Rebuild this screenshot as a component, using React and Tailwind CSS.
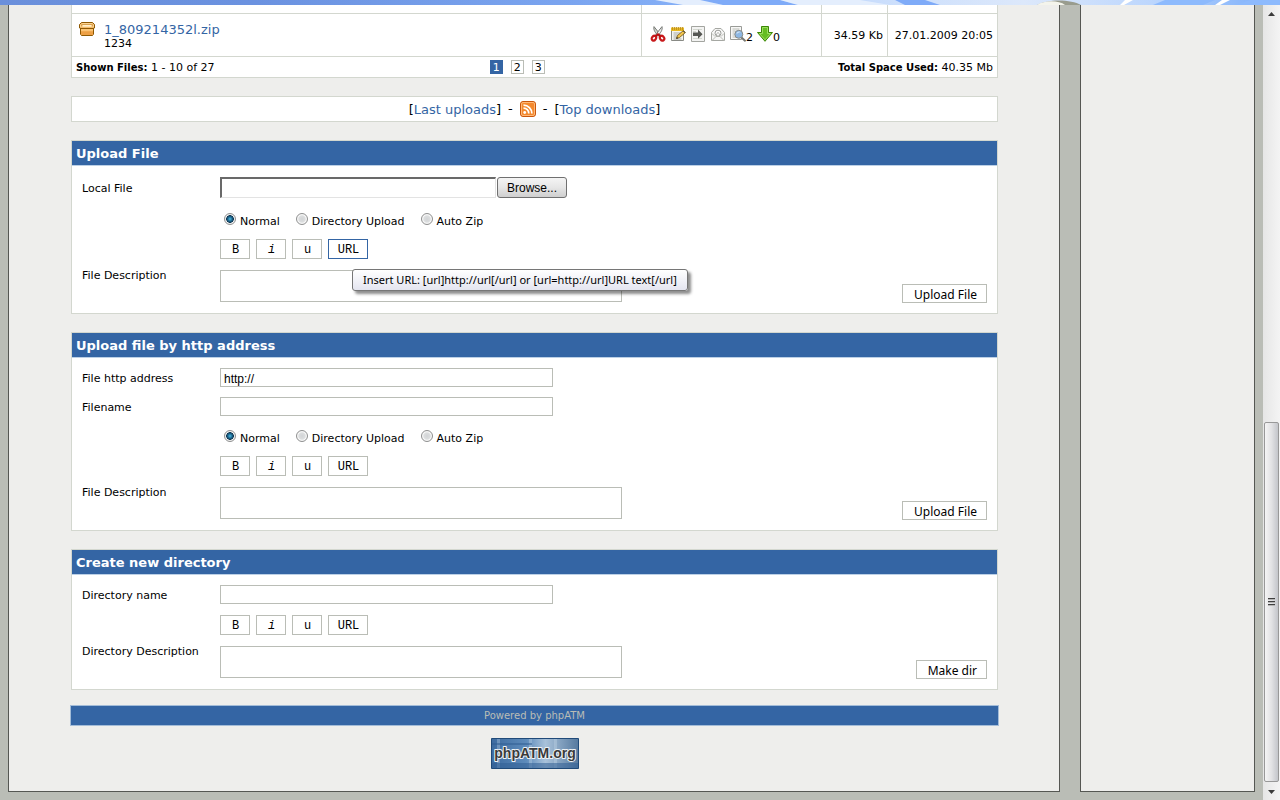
import React from "react";

const inputBox = "block h-[19px] w-[333px] border border-[#babdb6] bg-white px-[3px] pt-[3px] font-['Liberation_Sans',sans-serif] text-xs text-black outline-none";
const plainButton =
  "h-[19px] border border-[#babdb6] bg-white pl-[11px] pr-[9px] font-['Noto_Sans',sans-serif] text-xs leading-[19px] text-black";
const radioBox =
  "size-3 shrink-0 appearance-none rounded-full border border-[#8e8f8f] bg-[radial-gradient(circle,#d2d4d6_0%,#dcdedf_45%,#f8f8f8_60%,#eeeeee_100%)] checked:bg-[radial-gradient(circle_at_50%_50%,#4fc0e8_0%,#1f6d96_28%,#123a55_50%,#f4f4f4_58%,#e8e8e8_100%)]";

function ArchiveIcon() {
  return (
    <svg className="h-4 w-4 shrink-0" viewBox="0 0 16 16" aria-hidden="true">
      <path d="M2.500.5h11l2 2v3.500h-1v6l-1 1.500h-11l-1-1.500V6h-1V2.500z" fill="#eda045" stroke="#8f5902" />
      <path d="M3 1h10l2 2v2.500H1V3z" fill="#fbd391" />
      <path d="M2.500 4.500v-2h11v2" fill="none" stroke="#d9a04e" />
      <path d="M4 3h8v1.500H4z" fill="#fff0cc" />
      <path d="M1 6.500h14" stroke="#8f5902" />
      <path d="M2 7h12v2.500H2z" fill="#fbc475" />
      <path d="M2 9.500h12V13H2z" fill="#eda045" />
    </svg>
  );
}

function ScissorsIcon() {
  return (
    <svg className="size-4" viewBox="0 0 16 16" aria-hidden="true">
      <path d="M4 .6c-.8 3.600 1.500 6.400 4.600 9.500L10.300 9C8.500 6.500 6.500 3.500 4 .6z" fill="#d3d7cf" stroke="#777975" />
      <path d="M12 .6c.8 3.600-1.500 6.400-4.600 9.500L5.700 9C7.500 6.500 9.500 3.500 12 .6z" fill="#eeeeec" stroke="#777975" />
      <ellipse cx="3.900" cy="12.200" rx="2" ry="2.500" transform="rotate(35 3.900 12.200)" fill="#fff" stroke="#c8191b" strokeWidth="2.200" />
      <ellipse cx="12.100" cy="12.200" rx="2" ry="2.500" transform="rotate(-35 12.100 12.200)" fill="#fff" stroke="#c8191b" strokeWidth="2.200" />
      <path d="M5.500 10.300L8 8.300l2.500 2" fill="none" stroke="#b80f10" strokeWidth="2" />
    </svg>
  );
}

function NotepadIcon() {
  return (
    <svg className="size-4" viewBox="0 0 16 16" aria-hidden="true">
      <path d="M1.500 2.500h12v12h-12z" fill="#f4f4f0" stroke="#888a85" />
      <path d="M1 1.500h13V5H1z" fill="#e8b923" />
      <path d="M2.500 1v3m2-3v3m2-3v3m2-3v3m2-3v3m2-3v3" stroke="#b98a1c" strokeWidth=".8" />
      <path d="M3.500 7h7M3.500 9h5M3.500 11h4M3.500 13h8" stroke="#a9aba6" />
      <path d="M6.500 12.500l1-3 6-5 2 2-6 5z" fill="#f3c64e" stroke="#6d5010" strokeWidth=".8" />
      <path d="M6.300 12.800l.6-1.700 1.300 1.200z" fill="#222" />
      <path d="M13 5l2 1.800" stroke="#555753" />
    </svg>
  );
}

function MoveIcon() {
  return (
    <svg className="size-4" viewBox="0 0 16 16" aria-hidden="true">
      <path d="M1.500.5h13v15h-13z" fill="#f3f3f2" stroke="#a3a5a0" />
      <path d="M3 3.500h9M3 12.500h9M3 5.500h3" stroke="#d3d7cf" />
      <path d="M3 6.500h5V3.500L12.500 8.300l-4.500 4.500V10H3z" fill="#555753" />
    </svg>
  );
}

function MailIcon() {
  return (
    <svg className="size-4" viewBox="0 0 16 16" aria-hidden="true">
      <path d="M1.500 6.500L5 2.500h6l3.500 4v8h-13z" fill="#f6f6f5" stroke="#a5a7a2" />
      <path d="M2 14.500l4-4h4l4 4M2 7.500l3 3M14 7.500l-3 3" fill="none" stroke="#babdb6" />
      <circle cx="8" cy="7.200" r="3" fill="#fff" stroke="#9a9c98" />
      <path d="M6.500 9C6.500 6 9.500 6 9.500 9" fill="none" stroke="#9a9c98" strokeWidth=".8" />
    </svg>
  );
}

function PreviewIcon() {
  return (
    <svg className="size-4" viewBox="0 0 16 16" aria-hidden="true">
      <path d="M.5.5h11v13H.500z" fill="#f7f7f6" stroke="#999b97" />
      <path d="M2.500 3h7M2.500 5h3M2.500 7h2M2.500 9h2M2.500 11h4" stroke="#babdb6" />
      <path d="M11.500 11.500l3.500 3.200" stroke="#777975" strokeWidth="2" strokeLinecap="round" />
      <circle cx="8.800" cy="8.300" r="4" fill="#8db7e3" stroke="#888a85" />
      <path d="M6.500 8C7 5.500 9.500 5 11 6.300c-1.200 0-2.900.4-4.500 1.700z" fill="#d5e7f8" />
    </svg>
  );
}

function DownloadIcon() {
  return (
    <svg className="size-4" viewBox="0 0 16 16" aria-hidden="true">
      <path d="M4.500.5h7v6h4L8 15.300.500 6.500h4z" fill="#65bd22" stroke="#3c8706" />
      <path d="M5.500 1.500h5v6h3L8 13.800 2.500 7.500h3z" fill="none" stroke="#a8e56f" strokeWidth=".8" />
    </svg>
  );
}

function FeedIcon() {
  return (
    <svg className="size-4" viewBox="0 0 16 16" role="img" aria-label="RSS">
      <rect x=".5" y=".5" width="15" height="15" rx="2.500" fill="#f4892e" stroke="#c9560c" />
      <rect x="1.500" y="1.500" width="13" height="13" rx="1.500" fill="none" stroke="#ffb978" />
      <circle cx="4.700" cy="11.500" r="1.400" fill="#fff" />
      <path d="M3.500 7.200a5.200 5.200 0 0 1 5.300 5.300M3.500 4.100a8.400 8.400 0 0 1 8.400 8.400" fill="none" stroke="#fff" strokeWidth="1.700" />
    </svg>
  );
}

function TopStrip() {
  return (
    <svg className="block h-[5px] w-full shrink-0" viewBox="0 0 1280 5" preserveAspectRatio="none" aria-hidden="true">
      <defs>
        <linearGradient id="sky">
          <stop offset="0" stopColor="#6a8fdb" />
          <stop offset=".2" stopColor="#6b92e0" />
          <stop offset=".45" stopColor="#7ba5f0" />
          <stop offset=".6" stopColor="#8db8fc" />
          <stop offset=".68" stopColor="#c9ddfc" />
          <stop offset=".8" stopColor="#dce8fb" />
          <stop offset=".9" stopColor="#bcd6fd" />
          <stop offset="1" stopColor="#78acfa" />
        </linearGradient>
      </defs>
      <path d="M0 0h1280v5H0z" fill="url(#sky)" />
      <path d="M700 0h80l18 5h-75zM895 0h30l15 5h-35z" fill="#7fabf8" />
      <path d="M700 0h-45l28 5h40zM780 0h80l30 5h-92z" fill="#e4eefd" />
      <path d="M1125 0h8l-9 5h-4zM1222 0h8l-10 5h-5z" fill="#fff" />
      <path d="M1165 0h50l-12 5h-50zM1250 0h30v5h-45z" fill="#8dbafd" />
      <path d="M1037 5c10-6 34-6 44 0z" fill="#999c8e" />
      <path d="M1037 5c7-5 22-5 28 0z" fill="#f4f4ec" />
    </svg>
  );
}

function PhpAtmBadge() {
  return (
    <svg className="block h-[31px] w-[88px]" viewBox="0 0 88 31" role="img" aria-label="phpATM.org">
      <defs>
        <linearGradient id="badge">
          <stop offset="0" stopColor="#3d6ba0" />
          <stop offset=".4" stopColor="#5d8bbb" />
          <stop offset=".62" stopColor="#a9c2da" />
          <stop offset="1" stopColor="#55799f" />
        </linearGradient>
      </defs>
      <path d="M.5.5h87v30H.500z" fill="url(#badge)" stroke="#204a79" />
      <path d="M6 1h3v29H6zM38 1h3v29h-3zM63 1h3v29h-3z" fill="#d1e0ee" opacity=".3" />
      <path d="M1 5h40v2H1zM1 25h86v5H1z" fill="#315f93" opacity=".55" />
      <text x="44" y="20" textAnchor="middle" fontFamily="'Liberation Sans', sans-serif" fontSize="14" fontWeight="bold" fill="#3a3a3a" stroke="#eef2f5" strokeWidth="2" strokeLinejoin="round" paintOrder="stroke">
        phpATM.org
      </text>
    </svg>
  );
}

function FormatBar({ active }) {
  const base = "block h-5 border bg-white pl-px text-center font-['Liberation_Mono',monospace] text-xs leading-[20px] text-black";
  const idle = "border-[#babdb6]";
  return (
    <div className="flex h-5 gap-[6px]">
      <button type="button" className={`${base} ${idle} w-[30px]`}>B</button>
      <button type="button" className={`${base} ${idle} w-[30px] italic`}>i</button>
      <button type="button" className={`${base} ${idle} w-[30px]`}>u</button>
      <div className="relative">
        <button type="button" className={`${base} ${active ? "border-[#3465a4]" : idle} w-10`}>URL</button>
        {active && (
          <div
            role="tooltip"
            className="absolute left-6 top-[30px] z-10 h-[22px] whitespace-nowrap rounded-[3px] border border-[#767676] bg-linear-to-b from-white to-[#e4e5f0] px-[10px] font-['Noto_Sans',sans-serif] text-[11px] leading-5 text-black shadow-[3px_3px_3px_rgba(0,0,0,0.45)]"
          >
            Insert URL: [url]http://url[/url] or [url=http://url]URL text[/url]
          </div>
        )}
      </div>
    </div>
  );
}

function ModeRadios({ name }) {
  return (
    <div className="flex h-5 items-center gap-4 pl-1">
      {["Normal", "Directory Upload", "Auto Zip"].map((mode, i) => (
        <label key={mode} className="flex items-center gap-1">
          <input type="radio" name={name} defaultChecked={i === 0} className={radioBox} />
          <span className="pt-[6px] leading-3">{mode}</span>
        </label>
      ))}
    </div>
  );
}

function Row({ label, htmlFor, labelPad = "pt-[5px]", children }) {
  return (
    <div className="flex">
      <div className="w-[138px] shrink-0">
        {label && (
          <label htmlFor={htmlFor} className={`block leading-3 ${labelPad}`}>
            {label}
          </label>
        )}
      </div>
      {children}
    </div>
  );
}

function Section({ title, submit, children }) {
  return (
    <section className="mt-[18px] border border-[#d3d7cf] bg-white">
      <h2 className="h-[25px] border-b border-[#bcd0e6] bg-[#3465a4] px-1 pt-px text-[13px] font-bold leading-6 text-white">{title}</h2>
      <form className="flex items-end justify-between p-[10px]">
        <div className="flex flex-col gap-[10px] pb-px">{children}</div>
        <button type="button" className={plainButton}>{submit}</button>
      </form>
    </section>
  );
}

function Description({ label, id }) {
  return (
    <Row label={label} htmlFor={id} labelPad="pt-px">
      <textarea id={id} className="mt-px block h-8 w-[402px] resize-none border border-[#babdb6] bg-white outline-none" />
    </Row>
  );
}

function PageNumber({ current, children }) {
  return (
    <a
      href={`#page-${children}`}
      className={`block h-[14px] w-[13px] border text-center leading-[13px] ${current ? "border-[#3465a4] bg-[#3465a4] text-white" : "border-[#babdb6] bg-white text-black"}`}
    >
      {children}
    </a>
  );
}

function FileTable() {
  return (
    <table className="w-full table-fixed border-collapse border border-t-0 border-[#d3d7cf] bg-white">
      <colgroup>
        <col />
        <col className="w-[180px]" />
        <col className="w-[66px]" />
        <col className="w-[110px]" />
      </colgroup>
      <tbody>
        <tr className="h-2">
          <td className="border border-t-0 border-[#d3d7cf]" />
          <td className="border border-t-0 border-[#d3d7cf]" />
          <td className="border border-t-0 border-[#d3d7cf]" />
          <td className="border border-t-0 border-[#d3d7cf]" />
        </tr>
        <tr className="h-[43px]">
          <td className="border border-[#d3d7cf] p-0 pl-[7px] pt-[2px]">
            <div className="flex items-start gap-[9px]">
              <ArchiveIcon />
              <div>
                <a href="#file" className="block text-[13px] leading-4 text-[#3465a4]">1_809214352l.zip</a>
                <div className="leading-3">1234</div>
              </div>
            </div>
          </td>
          <td className="border border-[#d3d7cf] p-0 pb-[2px] pl-2">
            <div className="flex items-center">
              <button type="button" aria-label="Delete" className="mr-1"><ScissorsIcon /></button>
              <button type="button" aria-label="Edit" className="mr-1"><NotepadIcon /></button>
              <button type="button" aria-label="Move" className="mr-1"><MoveIcon /></button>
              <button type="button" aria-label="Mail" className="mr-1"><MailIcon /></button>
              <button type="button" aria-label="View"><PreviewIcon /></button>
              <span className="pt-2 leading-3">2</span>
              <button type="button" aria-label="Download" className="ml-1"><DownloadIcon /></button>
              <span className="pt-2 leading-3">0</span>
            </div>
          </td>
          <td className="whitespace-nowrap border border-[#d3d7cf] p-0 pr-1 pt-[2px] text-right">34.59 Kb</td>
          <td className="whitespace-nowrap border border-[#d3d7cf] p-0 pr-1 pt-[2px] text-right">27.01.2009 20:05</td>
        </tr>
        <tr className="h-[21px]">
          <td colSpan={4} className="border border-[#d3d7cf] p-0 px-1">
            <div className="grid grid-cols-[48fr_auto_52fr] items-center">
              <div className="pt-[2px]"><b className="text-[10px]">Shown Files:</b> 1 - 10 of 27</div>
              <nav className="flex gap-2">
                <PageNumber current>1</PageNumber>
                <PageNumber>2</PageNumber>
                <PageNumber>3</PageNumber>
              </nav>
              <div className="pt-[2px] text-right"><b className="text-[10px]">Total Space Used:</b> 40.35 Mb</div>
            </div>
          </td>
        </tr>
      </tbody>
    </table>
  );
}

function ScrollTrack() {
  return (
    <div className="flex w-[17px] shrink-0 flex-col bg-linear-to-r from-[#e6e6e6] to-[#f4f4f4]" aria-hidden="true">
      <svg className="h-[17px] w-full shrink-0" viewBox="0 0 17 17"><path d="M5 11l3.500-4 3.500 4z" fill="#3b3b3b" /></svg>
      <div className="flex-[401]" />
      <div className="mx-px flex flex-[358] flex-col items-center justify-center gap-px rounded-[2px] border border-[#989898] bg-linear-to-r from-[#f5f5f5] via-[#e2e2e4] to-[#c3c5ca]">
        <div className="h-[2px] w-[7px] border-t border-[#404040] bg-[#b5b5b5]" />
        <div className="h-[2px] w-[7px] border-t border-[#404040] bg-[#b5b5b5]" />
        <div className="h-[2px] w-[7px] border-t border-[#404040] bg-[#b5b5b5]" />
      </div>
      <svg className="h-[18px] w-full shrink-0" viewBox="0 0 17 18"><path d="M5 8l3.500 4L12 8z" fill="#3b3b3b" /></svg>
    </div>
  );
}

export default function App() {
  return (
    <div className="flex min-h-screen flex-col bg-[#babdb6] font-['DejaVu_Sans',Verdana,sans-serif] text-[11px] leading-4 text-black">
      <TopStrip />
      <div className="flex flex-1">
        <div className="flex flex-1 gap-5 px-2 pb-2">
          <main className="min-w-0 flex-1 border border-t-0 border-[#555753] bg-[#eeeeec] pb-[22px] pl-[62px] pr-[61px]">
            <FileTable />

            <div className="mt-[18px] flex h-[26px] items-center justify-center gap-[7px] border border-[#d3d7cf] bg-white text-[13px]">
              <span className="pt-[2px]">[<a href="#last" className="text-[#3465a4]">Last uploads</a>]</span>
              <span>-</span>
              <a href="#feed"><FeedIcon /></a>
              <span>-</span>
              <span className="pt-[2px]">[<a href="#top" className="text-[#3465a4]">Top downloads</a>]</span>
            </div>

            <Section title="Upload File" submit="Upload File">
              <Row label="Local File" htmlFor="local-file" labelPad="pt-[7px]">
                <div className="flex gap-px py-px">
                  <input id="local-file" type="text" className="h-[21px] w-[276px] border border-l-2 border-t-2 border-[#e3e3e3] border-l-[#696969] border-t-[#696969] bg-white outline-none" />
                  <button type="button" className="h-[21px] w-[70px] rounded-[3px] border border-[#707070] bg-linear-to-b from-[#f4f4f4] via-[#e6e6e6] to-[#cfcfcf] font-['Liberation_Sans',sans-serif] text-xs leading-5 text-black">
                    Browse...
                  </button>
                </div>
              </Row>
              <Row><ModeRadios name="mode-file" /></Row>
              <Row><FormatBar active /></Row>
              <Description label="File Description" id="file-desc" />
            </Section>

            <Section title="Upload file by http address" submit="Upload File">
              <Row label="File http address" htmlFor="http-address">
                <input id="http-address" type="text" defaultValue="http://" className={inputBox} />
              </Row>
              <Row label="Filename" htmlFor="http-name">
                <input id="http-name" type="text" className={inputBox} />
              </Row>
              <Row><ModeRadios name="mode-http" /></Row>
              <Row><FormatBar /></Row>
              <Description label="File Description" id="http-desc" />
            </Section>

            <Section title="Create new directory" submit="Make dir">
              <Row label="Directory name" htmlFor="dir-name">
                <div className="pb-px">
                  <input id="dir-name" type="text" className={inputBox} />
                </div>
              </Row>
              <Row><FormatBar /></Row>
              <Description label="Directory Description" id="dir-desc" />
            </Section>

            <footer className="-mx-px mt-[15px]">
              <div className="h-[21px] border border-[#a3bcd8] bg-[#3465a4] text-center text-[10px] leading-[19px] text-[#babdb6]">
                Powered by <a href="#phpatm">phpATM</a>
              </div>
              <a href="#home" className="mx-auto mt-3 block w-[88px]"><PhpAtmBadge /></a>
            </footer>
          </main>
          <aside className="w-[175px] shrink-0 border border-t-0 border-[#555753] bg-[#eeeeec]" />
        </div>
        <ScrollTrack />
      </div>
    </div>
  );
}
